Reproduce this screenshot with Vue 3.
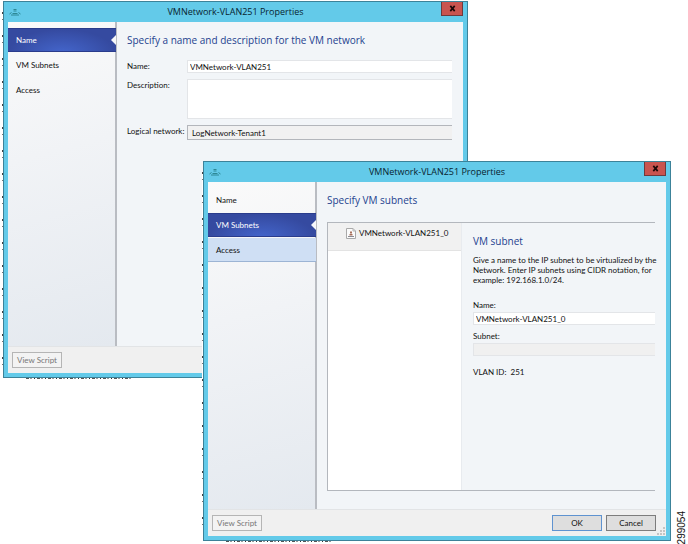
<script setup>
import { ref } from 'vue'

const steps = ['Name', 'VM Subnets', 'Access']
const networkName = ref('VMNetwork-VLAN251')
const description = ref('')
const logicalNetwork = ref('LogNetwork-Tenant1')
const subnetName = ref('VMNetwork-VLAN251_0')
const subnet = ref('')
const intro = [
  'Give a name to the IP subnet to be virtualized by the',
  'Network. Enter IP subnets using CIDR notation, for',
  'example: 192.168.1.0/24.',
]
const windows = [
  { id: 'name', active: 0, hover: -1 },
  { id: 'subnets', active: 1, hover: 2 },
]
</script>

<template>
  <main class="desktop">
    <section v-for="w in windows" :key="w.id" class="window" :class="'window-' + w.id">
      <header class="titlebar">
        <svg class="app-icon" viewBox="0 0 12 8" aria-hidden="true">
          <path d="M4.5 1.5h3M4.5 3h3M3.5 5.5h5M2.5 4.5L0.5 6M9.5 4.5l2 1.5M2 7h8" fill="none" stroke="#27808c" stroke-width="0.9" />
        </svg>
        <h1 class="title">VMNetwork-VLAN251 Properties</h1>
        <button type="button" class="close" aria-label="Close">
          <svg viewBox="0 0 8 8" aria-hidden="true"><path d="M1.5 1l5 6M6.5 1l-5 6" stroke="#1c0808" stroke-width="1.9" /></svg>
        </button>
      </header>

      <div class="body">
        <nav class="steps">
          <a
            v-for="(step, i) in steps"
            :key="step"
            href="#"
            class="step"
            :class="{ active: i === w.active, hover: i === w.hover }"
          >{{ step }}</a>
        </nav>

        <form v-if="w.id === 'name'" class="page">
          <h2 class="heading">Specify a name and description for the VM network</h2>
          <div class="fields">
            <label for="network-name">Name:</label>
            <input id="network-name" v-model="networkName" class="box" type="text" />
            <label for="description">Description:</label>
            <textarea id="description" v-model="description" class="box area"></textarea>
            <label for="logical">Logical network:</label>
            <input id="logical" v-model="logicalNetwork" class="box locked" type="text" readonly />
          </div>
        </form>

        <form v-else class="page">
          <h2 class="heading">Specify VM subnets</h2>
          <div class="pane">
            <ul class="list">
              <li class="entry">
                <svg class="file-icon" viewBox="0 0 10 11" aria-hidden="true">
                  <path d="M0.5 0.5h6.5l2.5 2.5v7.5h-9z" fill="#fbfbfb" stroke="#a9a9a9" />
                  <path d="M7 0.5v2.5h2.5" fill="none" stroke="#b5b5b5" />
                  <path d="M4 3.5h2v2H4zM3.5 6h3v1.5h-3z" fill="#a8705c" />
                  <path d="M2 8.5h6" stroke="#8a8a92" />
                </svg>
                <span>VMNetwork-VLAN251_0</span>
              </li>
            </ul>
            <div class="detail">
              <h3 class="subheading">VM subnet</h3>
              <p class="intro"><span v-for="line in intro" :key="line">{{ line }}</span></p>
              <label for="subnet-name">Name:</label>
              <input id="subnet-name" v-model="subnetName" class="box" type="text" />
              <label for="subnet" class="later">Subnet:</label>
              <input id="subnet" v-model="subnet" class="box faded" type="text" disabled />
              <p class="vlan">VLAN ID:&nbsp; 251</p>
            </div>
          </div>
        </form>
      </div>

      <footer class="footer">
        <button type="button" class="btn ghost" disabled>View Script</button>
        <div v-if="w.id === 'subnets'" class="actions">
          <button type="button" class="btn primary">OK</button>
          <button type="button" class="btn">Cancel</button>
        </div>
        <svg v-if="w.id === 'subnets'" class="grip" viewBox="0 0 8 8" aria-hidden="true">
          <path d="M6 0h2v2h-2zM3 3h2v2h-2zM6 3h2v2h-2zM0 6h2v2h-2zM3 6h2v2h-2zM6 6h2v2h-2z" fill="#c4c4c4" />
        </svg>
      </footer>
    </section>
    <p class="figure-id">299054</p>
  </main>
</template>

<style>
body {
  margin: 0;
  background: #fff;
}
</style>

<style scoped>
* {
  box-sizing: border-box;
}

.desktop {
  position: relative;
  min-height: 100vh;
  overflow: hidden;
  font-family: Lato, "Open Sans", sans-serif;
  font-size: 8px;
  line-height: 10px;
  color: #111;
}

h1, h2, h3, p, ul {
  margin: 0;
  padding: 0;
  font-weight: 400;
}

.window {
  position: absolute;
  display: flex;
  flex-direction: column;
  padding: 0 4px 4px;
  border: 1px solid #3c8299;
  background: #63cae9;
}

/* torn remains of the page behind each window */
.window::before {
  content: "";
  position: absolute;
  top: 10px;
  bottom: 10px;
  left: -2px;
  width: 1px;
  background: repeating-linear-gradient(#444 0 2px, #fff 2px 7px, #777 7px 8px, #fff 8px 23px);
}

.window::after {
  content: "";
  position: absolute;
  bottom: -2px;
  left: 22px;
  width: 105px;
  height: 1px;
  background: repeating-linear-gradient(90deg, #555 0 3px, #fff 3px 4px, #999 4px 6px, #fff 6px 8px, #333 8px 9px, #fff 9px 11px);
}

.window-name {
  top: 1px;
  right: 220px;
  bottom: 166px;
  left: 3px;
}

.window-subnets {
  top: 161px;
  right: 17px;
  bottom: 3px;
  left: 203px;
}

.titlebar {
  display: grid;
  grid-template-columns: 22px 1fr 22px;
  height: 20px;
  flex: none;
}

.app-icon {
  width: 12px;
  height: 8px;
  margin: 6px 0 0 1px;
}

.title,
.heading,
.subheading {
  font-family: "Open Sans", "Noto Sans", sans-serif;
}

.title {
  font-size: 9px;
  line-height: 20px;
  text-align: center;
  color: #082430;
  white-space: nowrap;
}

.close {
  display: flex;
  align-items: center;
  justify-content: center;
  height: 14px;
  padding: 0;
  border: 1px solid #6f3a3c;
  border-top: 0;
  background: #c9544f;
}

.close svg {
  width: 7px;
  height: 7px;
}

.body {
  display: grid;
  grid-template-columns: 109px 1fr;
  flex: 1;
  min-height: 0;
  background: #f2f5f8;
}

.steps {
  display: flex;
  flex-direction: column;
  gap: 1px;
  padding-top: 6px;
  border-right: 2px solid #b9bcc2;
  background: linear-gradient(165deg, #fafafa, #f1f3f6 40%, #e4e9ef);
}

.step {
  height: 24px;
  padding-left: 8px;
  margin-right: -1px;
  line-height: 24px;
  color: #111;
  text-decoration: none;
}

.step.active {
  position: relative;
  border-top: 1px solid #2a3c8c;
  border-bottom: 1px solid #2a3c8c;
  line-height: 22px;
  color: #fff;
  background: radial-gradient(ellipse at 50% 110%, #4466cc, #354aa0 70%);
}

.step.active::after {
  content: "";
  position: absolute;
  top: 6px;
  right: 0;
  border: 5px solid transparent;
  border-left: 0;
  border-right-color: #f6f7fa;
}

.step.hover {
  border-bottom: 1px solid #9cb4d4;
  background: #cfdff4;
}

.page {
  display: flex;
  flex-direction: column;
  min-width: 0;
  padding: 10px 11px 18px 10px;
}

.heading,
.subheading {
  font-size: 10px;
  line-height: 16px;
  color: #24428f;
  white-space: nowrap;
}

.fields {
  display: grid;
  grid-template-columns: 60px 1fr;
  row-gap: 6px;
  margin-top: 12px;
}

.fields label {
  line-height: 13px;
  white-space: nowrap;
}

.box {
  display: block;
  width: 100%;
  min-width: 0;
  height: 13px;
  padding: 0 2px;
  border: 1px solid #e3e5e8;
  border-right: 0;
  border-radius: 0;
  outline: 0;
  font: inherit;
  color: inherit;
  background: #fff;
}

.area {
  height: 40px;
  resize: none;
}

.locked {
  height: 15px;
  padding-left: 4px;
  border-color: #b3b6bb;
  background: #f1f1f1;
}

.faded {
  background: #f0f0f0;
}

.pane {
  display: grid;
  grid-template-columns: 134px 1fr;
  flex: 1;
  margin-top: 14px;
  border: 1px solid #b3b7bd;
  border-right: 0;
}

.list {
  background: #fff;
  border-right: 1px solid #e8ebef;
  list-style: none;
}

.entry {
  display: flex;
  gap: 3px;
  height: 28px;
  padding: 5px 0 0 18px;
  border-bottom: 1px solid #e3e3e3;
  background: #f1f1f1;
}

.file-icon {
  width: 10px;
  height: 11px;
}

.detail {
  min-width: 0;
  padding: 10px 0 0 11px;
}

.intro {
  margin: 6px 0 15px;
}

.intro span {
  display: block;
  white-space: nowrap;
}

.detail label {
  display: block;
  margin-bottom: 2px;
}

.detail .later {
  margin-top: 6px;
}

.vlan {
  margin-top: 11px;
}

.footer {
  position: relative;
  display: flex;
  justify-content: space-between;
  flex: none;
  height: 27px;
  padding: 5px 10px 0 4px;
  border-top: 1px solid #e2e4e6;
  background: #f0f0f0;
}

.actions {
  display: flex;
  gap: 4px;
}

.btn {
  width: 50px;
  height: 16px;
  padding: 0;
  border: 1px solid #7d7d7d;
  font: inherit;
  line-height: 13px;
  color: #111;
  background: #dedede;
}

.btn.primary {
  border-color: #5f93d0;
}

.btn.ghost {
  border-color: #b5b5b5;
  color: #777;
  background: #f3f3f3;
}

.grip {
  position: absolute;
  right: 1px;
  bottom: 1px;
  width: 8px;
  height: 8px;
}

.figure-id {
  position: absolute;
  right: 0;
  bottom: 0;
  font: 10px/12px "Liberation Sans", Arial, sans-serif;
  color: #111;
  writing-mode: vertical-rl;
  transform: rotate(180deg);
}
</style>
